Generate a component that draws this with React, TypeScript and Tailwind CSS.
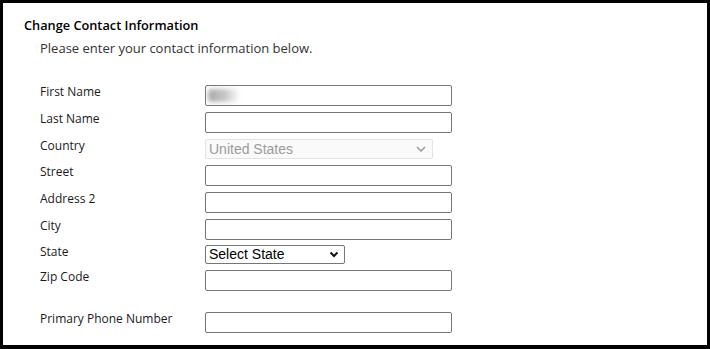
import React from "react";

const fields = [
  { label: "First Name", kind: "text", value: true, h: "h-[27px]" },
  { label: "Last Name", kind: "text", h: "h-[27px]" },
  { label: "Country", kind: "country", h: "h-[26px]" },
  { label: "Street", kind: "text", h: "h-[27px]" },
  { label: "Address 2", kind: "text", h: "h-[27px]" },
  { label: "City", kind: "text", h: "h-[26px]" },
  { label: "State", kind: "state", h: "h-[25px]" },
  { label: "Zip Code", kind: "text", h: "h-[42px]" },
  { label: "Primary Phone Number", kind: "text", h: "h-[27px]" },
];

function Field({ kind, value }: { kind: string; value?: boolean }) {
  if (kind === "country") {
    return (
      <div className="flex h-[20px] w-[228px] items-center justify-between rounded-[2px] border border-[#e3e3e3] bg-[#fafafa] pl-[3px] pr-[6px] font-['Liberation_Sans',sans-serif] text-[14px] text-[#9a9a9a]">
        <span>United States</span>
        <svg width="10" height="6" viewBox="0 0 10 6" fill="none">
          <path d="M1 1l4 4 4-4" stroke="#9a9a9a" strokeWidth="1.5" />
        </svg>
      </div>
    );
  }
  if (kind === "state") {
    return (
      <div className="flex h-[19px] w-[140px] items-center justify-between rounded-[2px] border border-[#767676] bg-white pl-[3px] pr-[5px] font-['Liberation_Sans',sans-serif] text-[14px] text-black">
        <span>Select State</span>
        <svg width="10" height="7" viewBox="0 0 10 7" fill="none">
          <path d="M1.5 1.5l3.5 3.5 3.5-3.5" stroke="#111" strokeWidth="2" />
        </svg>
      </div>
    );
  }
  return (
    <div className="relative h-[21px] w-[247px] rounded-[2px] border border-[#767676] bg-white">
      {value && (
        <div className="absolute left-[2px] top-[3px] h-[13px] w-[32px] rounded-sm bg-gradient-to-r from-[#aaaaaa] via-[#c4c4c4] to-transparent blur-[2px]" />
      )}
    </div>
  );
}

export default function App() {
  return (
    <div className="h-[349px] w-[710px] border-x-[3px] border-t-[3px] border-b-[4px] border-black bg-white font-['Open_Sans',sans-serif] text-[#222]">
      <div className="pl-[21px] pt-[13px]">
        <h1 className="text-[12.75px] font-semibold leading-[18px] text-black">
          Change Contact Information
        </h1>
        <p className="ml-[16px] mt-[5px] text-[13px] leading-[18px] text-[#333]">
          Please enter your contact information below.
        </p>
        <div className="ml-[16px] mt-[28px]">
          {fields.map((f) => (
            <div key={f.label} className={`flex items-start ${f.h}`}>
              <label className="-mt-[1px] w-[165px] text-[12px] leading-[16px] text-[#1a1a1a]">
                {f.label}
              </label>
              <Field kind={f.kind} value={f.value} />
            </div>
          ))}
        </div>
      </div>
    </div>
  );
}
